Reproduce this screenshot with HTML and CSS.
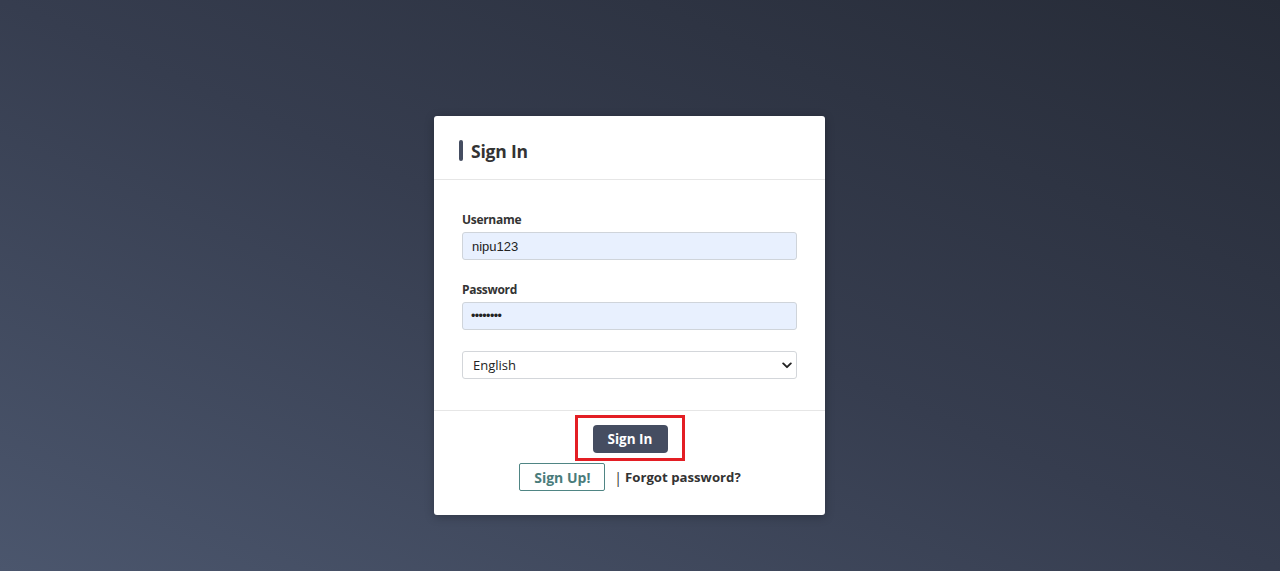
FILE: index.html
```html
<!DOCTYPE html>
<html lang="en">
<head>
<meta charset="utf-8">
<title>Sign In</title>
<link rel="stylesheet" href="styles.css">
</head>
<body>
<div class="page">
  <div class="card">
    <div class="card-header">
      <span class="accent"></span>
      <h1 class="title">Sign In</h1>
    </div>
    <form class="card-body">
      <label class="label" for="u">Username</label>
      <div class="input filled" id="u">nipu123</div>
      <label class="label" for="p">Password</label>
      <div class="input filled pw" id="p">••••••••</div>
      <div class="select">
        <span>English</span>
        <svg class="chev" width="10" height="7" viewBox="0 0 10 7"><path d="M1.2 1.4 L5 5.2 L8.8 1.4" fill="none" stroke="#222" stroke-width="1.9" stroke-linecap="round" stroke-linejoin="round"/></svg>
      </div>
    </form>
    <div class="card-footer">
      <div class="highlight"><button class="btn-primary" type="button">Sign In</button></div>
      <div class="links">
        <button class="btn-outline" type="button">Sign Up!</button>
        <span class="sep">|</span>
        <a class="forgot" href="#">Forgot password?</a>
      </div>
    </div>
  </div>
</div>
</body>
</html>
```

FILE: styles.css
```css
* { box-sizing: border-box; }
html, body { margin: 0; height: 100%; }
body {
  background: linear-gradient(to top right, #4b566d 0%, #363d4f 50%, #262b37 100%);
  font-family: "Open Sans", "Noto Sans", sans-serif;
  color: #333;
  overflow: hidden;
}
.page {
  padding: 116px 0 0 434px;
}
.card {
  width: 391px;
  height: 399px;
  background: #fff;
  border-radius: 3px;
  box-shadow: 0 2px 10px rgba(0,0,0,0.25);
  display: flex;
  flex-direction: column;
}
.card-header {
  height: 64px;
  border-bottom: 1px solid #e6e6e6;
  display: flex;
  align-items: center;
  padding: 6px 0 0 25px;
  gap: 8px;
}
.accent {
  width: 4px;
  height: 21px;
  background: #454d61;
  border-radius: 2px;
}
.title {
  margin: 0;
  font-size: 17.5px;
  font-weight: 700;
  letter-spacing: -0.2px;
  color: #333;
  line-height: 24px;
}
.card-body {
  padding: 31px 28px 0 28px;
  height: 231px;
  border-bottom: 1px solid #e6e6e6;
  display: flex;
  flex-direction: column;
}
.label {
  font-size: 12px;
  font-weight: 700;
  letter-spacing: -0.3px;
  line-height: 18px;
  margin-bottom: 3px;
  color: #333;
}
.input {
  height: 28px;
  border: 1px solid #cfd4da;
  border-radius: 3px;
  padding: 0 9px;
  display: flex;
  align-items: center;
  font-family: "Liberation Sans", Arial, sans-serif;
  font-size: 13px;
  color: #222;
  margin-bottom: 21px;
}
.filled { background: #e8f0fe; }
.pw { font-size: 12.5px; letter-spacing: -0.6px; padding-left: 8px; }
.select {
  height: 28px;
  border: 1px solid #d3d6da;
  border-radius: 3px;
  padding: 0 4px 0 10px;
  display: flex;
  align-items: center;
  justify-content: space-between;
  font-size: 13px;
  color: #222;
  background: #fff;
}
.chev { margin-top: 1px; }
.card-footer {
  display: flex;
  flex-direction: column;
  align-items: center;
  padding-top: 4px;
  padding-left: 1px;
}
.highlight {
  border: 3px solid #e31e24;
  padding: 7px 14px 5px 15px;
  margin-left: -1px;
}
.btn-primary {
  width: 75px;
  height: 28px;
  border: none;
  border-radius: 4px;
  background: #454d61;
  color: #fff;
  font-family: "Open Sans", "Noto Sans", sans-serif;
  font-size: 13.5px;
  font-weight: 700;
  padding: 0;
}
.links {
  margin-top: 2px;
  display: flex;
  align-items: center;
  margin-left: 0;
}
.btn-outline {
  width: 86px;
  height: 28px;
  border: 1.5px solid #4f8584;
  border-radius: 2px;
  background: #fff;
  color: #4a7c7b;
  font-family: "Open Sans", "Noto Sans", sans-serif;
  font-size: 14px;
  font-weight: 700;
  padding: 0;
}
.sep {
  margin-left: 9px;
  margin-right: 3px;
  font-size: 14px;
  color: #333;
}
.forgot {
  font-size: 13.2px;
  font-weight: 700;
  color: #333;
  text-decoration: none;
}
```
